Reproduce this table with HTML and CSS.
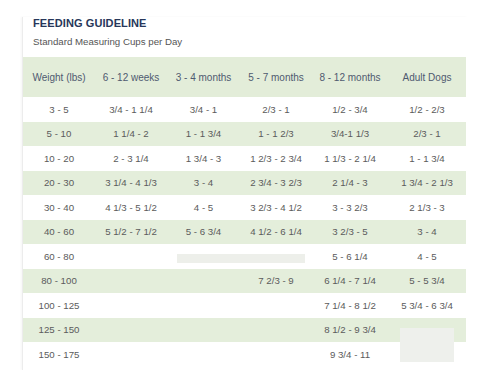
FILE: index.html
```html
<!DOCTYPE html>
<html>
<head>
<meta charset="utf-8">
<link rel="stylesheet" href="styles.css">
</head>
<body>
<div class="card">
  <div class="title">FEEDING GUIDELINE</div>
  <div class="subtitle">Standard Measuring Cups per Day</div>
  <table class="guide">
    <colgroup>
      <col class="c1"><col class="c2"><col class="c3"><col class="c4"><col class="c5"><col class="c6">
    </colgroup>
    <thead>
      <tr><th>Weight (lbs)</th><th>6 - 12 weeks</th><th>3 - 4 months</th><th>5 - 7 months</th><th>8 - 12 months</th><th>Adult Dogs</th></tr>
    </thead>
    <tbody>
      <tr><td>3 - 5</td><td>3/4 - 1 1/4</td><td>3/4 - 1</td><td>2/3 - 1</td><td>1/2 - 3/4</td><td>1/2 - 2/3</td></tr>
      <tr><td>5 - 10</td><td>1 1/4 - 2</td><td>1 - 1 3/4</td><td>1 - 1 2/3</td><td>3/4-1 1/3</td><td>2/3 - 1</td></tr>
      <tr><td>10 - 20</td><td>2 - 3 1/4</td><td>1 3/4 - 3</td><td>1 2/3 - 2 3/4</td><td>1 1/3 - 2 1/4</td><td>1 - 1 3/4</td></tr>
      <tr><td>20 - 30</td><td>3 1/4 - 4 1/3</td><td>3 - 4</td><td>2 3/4 - 3 2/3</td><td>2 1/4 - 3</td><td>1 3/4 - 2 1/3</td></tr>
      <tr><td>30 - 40</td><td>4 1/3 - 5 1/2</td><td>4 - 5</td><td>3 2/3 - 4 1/2</td><td>3 - 3 2/3</td><td>2 1/3 - 3</td></tr>
      <tr><td>40 - 60</td><td>5 1/2 - 7 1/2</td><td>5 - 6 3/4</td><td>4 1/2 - 6 1/4</td><td>3 2/3 - 5</td><td>3 - 4</td></tr>
      <tr><td>60 - 80</td><td></td><td></td><td></td><td>5 - 6 1/4</td><td>4 - 5</td></tr>
      <tr><td>80 - 100</td><td></td><td></td><td>7 2/3 - 9</td><td>6 1/4 - 7 1/4</td><td>5 - 5 3/4</td></tr>
      <tr><td>100 - 125</td><td></td><td></td><td></td><td>7 1/4 - 8 1/2</td><td>5 3/4 - 6 3/4</td></tr>
      <tr><td>125 - 150</td><td></td><td></td><td></td><td>8 1/2 - 9 3/4</td><td></td></tr>
      <tr><td>150 - 175</td><td></td><td></td><td></td><td>9 3/4 - 11</td><td></td></tr>
    </tbody>
  </table>
  <div class="mask mask-a"></div>
  <div class="mask mask-b"></div>
</div>
</body>
</html>
```

FILE: styles.css
```css
html, body {
  margin: 0;
  padding: 0;
  background: #ffffff;
}

body {
  font-family: "Liberation Sans", Arial, sans-serif;
}

.card {
  position: relative;
  margin: 17px 0 0 22px;
  width: 444px;
  height: 353px;
  border-left: 1px solid #ececec;
  box-shadow: -1px 0 2px rgba(0, 0, 0, 0.04);
}

.title {
  padding-left: 10px;
  font-size: 11px;
  font-weight: bold;
  line-height: 13px;
  color: #27375a;
  letter-spacing: 0.1px;
}

.subtitle {
  margin-top: 6px;
  padding-left: 10px;
  font-size: 9.7px;
  line-height: 12px;
  color: #555555;
}

.guide {
  margin-top: 9px;
  width: 443px;
  border-collapse: collapse;
  table-layout: fixed;
}

.c1 { width: 72px; }
.c2 { width: 72px; }
.c3 { width: 73px; }
.c4 { width: 72px; }
.c5 { width: 76px; }
.c6 { width: 78px; }

.guide th {
  height: 40px;
  padding: 0;
  background: #e3edd9;
  font-size: 10px;
  font-weight: normal;
  color: #4f5a70;
  text-align: center;
}

.guide td {
  height: 24.5px;
  padding: 0;
  font-size: 9.7px;
  color: #5b5b5b;
  text-align: center;
  white-space: nowrap;
}

.guide tbody tr:nth-child(even) td {
  background: #e4eedb;
}

.mask {
  position: absolute;
  background: #edefea;
}

.mask-a {
  left: 154px;
  top: 237px;
  width: 128px;
  height: 9px;
}

.mask-b {
  left: 377px;
  top: 311px;
  width: 54px;
  height: 34px;
  background: #eef0ec;
}
```
